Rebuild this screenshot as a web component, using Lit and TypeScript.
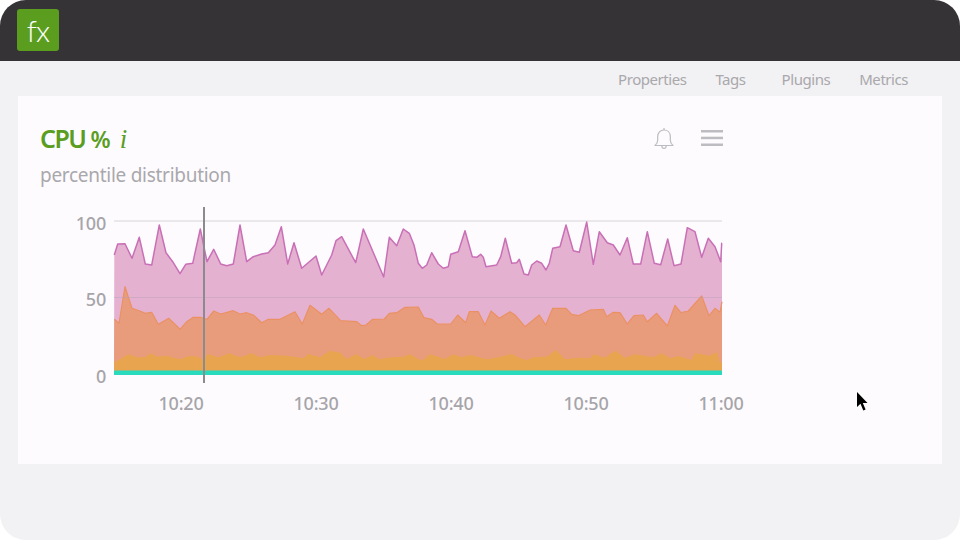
import { LitElement, html, css, svg } from 'lit';
import { customElement } from 'lit/decorators.js';

// Series are traced in page coordinates; the chart's viewBox starts at the same origin.
const BASE = 375;

const PINK = '114,375 114.3,255 117.7,244 125,243.7 132,258.3 139.3,237.3 145.3,264 151.7,265 159.3,225 166,252.7 172.7,261.7 180,273.7 185.7,264.3 192.7,263.3 200.3,229 207,261.7 213.7,249.3 220.7,264 226.7,265.7 233.3,264 240,225 246.7,261.7 253.3,256.7 261.7,254 268.3,252.7 275,245 281.3,226.7 287.7,264 294,242.7 301.7,268.3 316,256 321.7,275 331.7,255 336,240.7 341.7,236.7 355.7,262.7 363.3,229 383.7,277 389.3,237.3 396.7,245.7 403.3,229 409.3,233.3 414,245 418.3,263.3 422.3,268.3 426.7,265 431.7,252.7 438.3,264 443.3,268.3 448.3,266.7 450.7,254.3 458.3,251.7 465,230.7 472.3,256.7 476.7,257.3 480.7,254.3 483.3,257.3 486,266.7 496.7,265 500.7,256.7 505.3,238.3 511.7,263.3 516.7,262.7 519.3,259.3 524,274 528.3,275 531.7,265 536.7,261 541.7,263.3 546,270 549.3,263.3 552.7,248.3 560,246.7 566,225 573.3,250.7 579.3,252.3 586.7,222 593.3,264.3 599.3,231.7 607.3,242.7 613.3,245 620,255 627.3,237.7 633.3,264 640.7,264 647.3,231.7 654.3,263.3 660.7,264.7 667.7,239 674,265.7 681,264 687.3,227.7 695,231.7 701.7,257.3 708.3,238.3 715,246.7 720.7,261.7 721.7,243.3 722,243.3 722,375';

const ORANGE = '114,375 114.3,319.3 119,323.3 125,286.7 132,308.3 139.3,310.7 145.3,313.3 151.7,312.3 158.3,324.3 168.7,318.3 180,329.3 186.7,321.7 193.3,317.3 200.3,317.3 207,319.3 213.7,311 220.7,314 233.3,310.7 240,314 246.7,312.7 253.3,315 261.7,322.7 268.3,319.3 280,319.3 295,311.7 302.3,324 310,305.3 321.7,314.3 329,308.3 340.7,320.7 356.7,321.7 361.7,325.7 366,325 372.7,319.3 384.3,319 389.3,313.3 396.7,312.7 405,307.3 418.3,307 424,317.7 431.7,319.3 437.3,324 450.7,324 457.7,315 465.7,322.7 469.3,311.7 478.3,311.7 485,325 491,311 499.3,318.3 510,311.7 515,315 525,326.7 539.3,315 545.7,325 552.7,308.3 566,308.3 571.7,314.3 578.3,315.7 590,310 603.3,309.3 606.7,316.7 613.3,312.3 620,312.7 627.3,324 634,315.7 643.3,315 647.3,321.7 656.7,313.3 667.3,326 675,305.3 681,312.7 688.3,311 701.7,296 709,315.7 715,308.3 720,312.3 722,301.7 722,375';

const YELLOW = '114,375 114.3,361.7 119,360 128.3,354.3 136.7,357.3 145,357.3 150.7,353.3 157.3,356.7 165,355.7 170,356.7 180,359.3 190,355.7 198.3,356.7 203.3,360.7 207.3,354 218.3,357.3 229.3,353.3 240,357.3 251.7,353.3 260,357.3 270,355 286.7,355.7 303.3,358.3 308.3,354 320,357.3 330,350.7 340,352.7 346.7,359 355.7,354.3 365,359 371.7,355 380,359.3 390,357.3 403.3,356.7 410,354 418.3,359.3 423.3,360 430,354.3 445,359 453.3,354.3 461.7,357.3 470,355 486.7,359.3 498.3,357.3 511.7,354 520,358.3 526.7,360 533.3,357.3 546.7,356.7 556,350 565,359.3 578.3,357.7 590,358.3 593.3,354.3 605,357.7 615,350.7 625,357.7 635,354.3 653.3,357.3 661.7,353.3 670,358.3 678.3,356 691.7,360 695,353.3 710,355.7 716.7,352 720,363 722,362 722,375';

const stripClose = (pts: string) => pts.split(' ').slice(1, -1).join(' ');

const Y_LABELS = [
  { text: '100', y: 230 },
  { text: '50', y: 306 },
  { text: '0', y: 383 },
];

const X_LABELS = [
  { text: '10:20', x: 181 },
  { text: '10:30', x: 316 },
  { text: '10:40', x: 451 },
  { text: '10:50', x: 586 },
  { text: '11:00', x: 721 },
];

@customElement('cpu-chart')
export class CpuChart extends LitElement {
  static styles = css`
    :host { display: block; }
    svg { display: block; }
    .label {
      font-family: 'Noto Sans', sans-serif;
      font-size: 18px;
      font-weight: 500;
      letter-spacing: -0.2px;
      fill: #a6a5a9;
    }
    .grid { stroke: #e4e2e6; stroke-width: 1.5; }
    .grid-over { stroke: #b9a0b4; stroke-opacity: 0.45; stroke-width: 1; }
    .cursor { stroke: #8b8a8e; stroke-width: 2; }
  `;

  render() {
    return html`
      <svg width="700" height="220" viewBox="60 200 700 220">
        <line class="grid" x1="114" y1="221" x2="722" y2="221"></line>
        <polygon points=${PINK} fill="#e5b1d1"></polygon>
        <polyline points=${stripClose(PINK)} fill="none" stroke="#c96fb6" stroke-width="1.5" stroke-linejoin="round"></polyline>
        <polygon points=${ORANGE} fill="#e99c7c"></polygon>
        <polyline points=${stripClose(ORANGE)} fill="none" stroke="#ea9163" stroke-width="1.2" stroke-linejoin="round"></polyline>
        <polygon points=${YELLOW} fill="#e8a44e"></polygon>
        <rect x="114" y=${BASE - 4.5} width="608" height="4.5" fill="#2adabd"></rect>
        <line class="grid-over" x1="114" y1="297.5" x2="722" y2="297.5"></line>
        <line class="cursor" x1="204" y1="207" x2="204" y2="383"></line>
        ${Y_LABELS.map(
          (l) => svg`<text class="label" x="106" y=${l.y} text-anchor="end">${l.text}</text>`
        )}
        ${X_LABELS.map(
          (l) => svg`<text class="label" x=${l.x} y="410" text-anchor="middle">${l.text}</text>`
        )}
      </svg>
    `;
  }
}

@customElement('app-root')
export class AppRoot extends LitElement {
  static styles = css`
    :host {
      display: block;
      width: 960px;
      height: 540px;
      background: #fff;
      font-family: 'Noto Sans', sans-serif;
    }

    /* === Window frame === */
    .frame {
      position: relative;
      height: 540px;
      background: #f2f1f3;
      border-radius: 26px;
      overflow: hidden;
    }

    .topbar {
      height: 61px;
      box-sizing: border-box;
      padding: 9px 0 0 17px;
      background: #353336;
    }

    .logo {
      width: 42px;
      height: 42px;
      display: flex;
      align-items: center;
      justify-content: center;
      background: #5b9e1f;
      border-radius: 3px;
      color: #fff;
      font-family: 'Lato', sans-serif;
      font-weight: 300;
      font-size: 30px;
      letter-spacing: -1px;
      line-height: 1;
    }

    /* === Tabs === */
    .tabs {
      height: 35px;
      display: flex;
      align-items: center;
      justify-content: flex-end;
      gap: 29px;
      padding-right: 52px;
      color: #a9a8ac;
      font-size: 15px;
      letter-spacing: -0.45px;
    }
    .tabs .wide { margin-right: 7px; }

    /* === Card === */
    .card {
      width: 924px;
      height: 368px;
      margin-left: 18px;
      box-sizing: border-box;
      padding: 27px 0 0 22px;
      background: #fdfbfe;
    }

    .head {
      width: 683px;
      height: 30px;
      display: flex;
      align-items: center;
      justify-content: space-between;
    }

    .title {
      display: flex;
      align-items: baseline;
      color: #5b9e1f;
      font-size: 25px;
      font-weight: 600;
      letter-spacing: -1.5px;
    }
    .title .pct { margin-left: 5px; letter-spacing: 0; font-size: 23px; }
    .title i {
      margin-left: 9px;
      font-family: 'Liberation Serif', serif;
      font-weight: 400;
      font-size: 27px;
    }

    .actions {
      display: flex;
      align-items: center;
      gap: 27px;
    }

    .sub {
      margin-top: 9px;
      color: #a9a8ac;
      font-size: 19px;
      letter-spacing: -0.28px;
      line-height: 26px;
    }

    cpu-chart { margin: 12px 0 0 20px; }

    .pointer {
      position: absolute;
      left: 856px;
      top: 391px;
    }
  `;

  render() {
    return html`
      <div class="frame">
        <div class="topbar"><div class="logo">fx</div></div>
        <nav class="tabs">
          <span>Properties</span>
          <span class="wide">Tags</span>
          <span>Plugins</span>
          <span>Metrics</span>
        </nav>
        <section class="card">
          <div class="head">
            <div class="title">CPU<span class="pct">%</span><i>i</i></div>
            <div class="actions">
              <svg width="20" height="23" viewBox="0 0 20 23" fill="none" stroke="#bdbcc0" stroke-width="1.2" stroke-linejoin="round">
                <path d="M1 18.5c1.8-1.4 2.7-3 2.7-5.5V9.5C3.700 5.800 6.200 3 10 3s6.300 2.800 6.300 6.500V13c0 2.500.9 4.100 2.700 5.500z"></path>
                <path d="M10 3V1M7.800 18.500c0 1.700 1 3 2.200 3s2.200-1.300 2.200-3"></path>
              </svg>
              <svg width="22" height="16" viewBox="0 0 22 16" fill="#bdbcc0">
                <rect width="22" height="2.500"></rect>
                <rect y="6.700" width="22" height="2.500"></rect>
                <rect y="13.500" width="22" height="2.500"></rect>
              </svg>
            </div>
          </div>
          <div class="sub">percentile distribution</div>
          <cpu-chart></cpu-chart>
        </section>
        <svg class="pointer" width="12" height="21" viewBox="0 0 12 21">
          <path d="M1 1v15l3.500-3.200 2.800 6.800 2.300-1-2.800-6.500h4.700z" fill="#000"></path>
        </svg>
      </div>
    `;
  }
}

declare global {
  interface HTMLElementTagNameMap {
    'app-root': AppRoot;
    'cpu-chart': CpuChart;
  }
}
